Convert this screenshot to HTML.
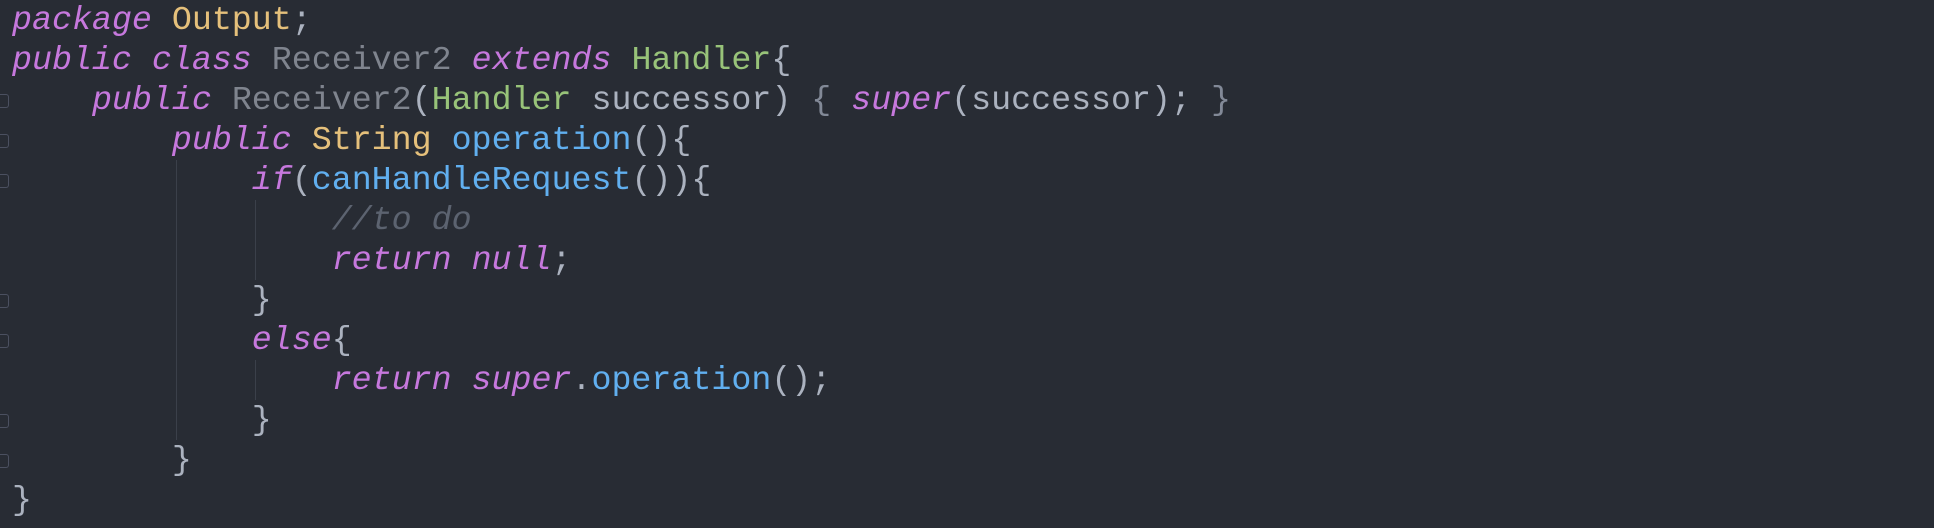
<!DOCTYPE html><html><head><style>
body{margin:0;background:#282c34;width:1934px;height:528px;overflow:hidden;position:relative}
pre{margin:0;position:absolute;left:12px;top:0;font-family:"Liberation Mono",monospace;font-size:33.3px;line-height:40px;color:#abb2bf}
.k{color:#c678dd;font-style:italic}.y{color:#e5c07b}.g{color:#98c379}.b{color:#61afef}.d{color:#7f848e}.c{color:#5c6370;font-style:italic}.p{color:#828997}
.gd{position:absolute;width:1px;background:#3b404a}
.f{position:absolute;left:0;width:8px;height:12px;border:1px solid #4b5060;border-left:none;border-radius:0 3px 3px 0}
</style></head><body>
<div class="gd" style="left:176px;top:160px;height:280px"></div>
<div class="gd" style="left:255px;top:200px;height:80px"></div>
<div class="gd" style="left:255px;top:360px;height:40px"></div>
<div class="f" style="top:94px"></div><div class="f" style="top:134px"></div><div class="f" style="top:174px"></div>
<div class="f" style="top:294px"></div><div class="f" style="top:334px"></div><div class="f" style="top:414px"></div><div class="f" style="top:454px"></div>
<pre><span class="k">package</span> <span class="y">Output</span>;
<span class="k">public class</span> <span class="d">Receiver2</span> <span class="k">extends</span> <span class="g">Handler</span>{
    <span class="k">public</span> <span class="d">Receiver2</span>(<span class="g">Handler</span> successor) <span class="p">{</span> <span class="k">super</span>(successor); <span class="p">}</span>
        <span class="k">public</span> <span class="y">String</span> <span class="b">operation</span>(){
            <span class="k">if</span>(<span class="b">canHandleRequest</span>()){
                <span class="c">//to do</span>
                <span class="k">return null</span>;
            }
            <span class="k">else</span>{
                <span class="k">return super</span>.<span class="b">operation</span>();
            }
        }
}</pre>
</body></html>
